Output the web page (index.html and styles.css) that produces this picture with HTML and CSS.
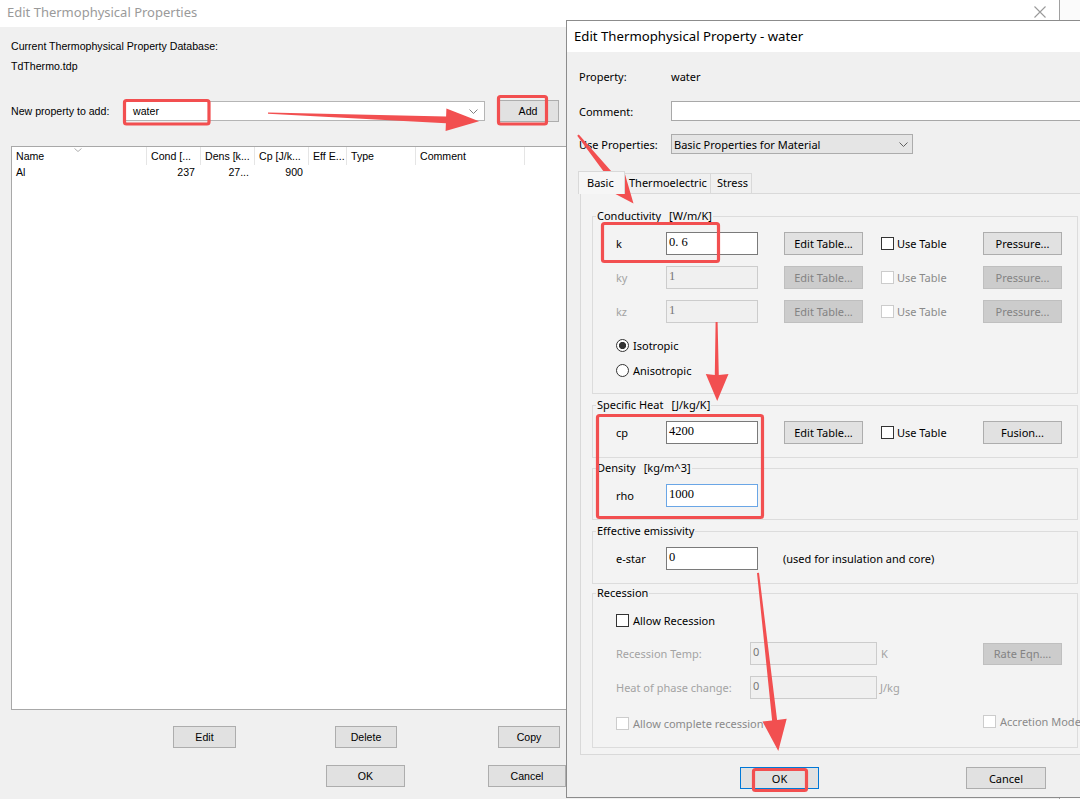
FILE: index.html
```html
<!DOCTYPE html>
<html>
<head>
<meta charset="utf-8">
<link rel="stylesheet" href="styles.css">
</head>
<body>
<div class="main">
  <div class="main-title">
    <span>Edit Thermophysical Properties</span>
    <svg class="close-x" width="12" height="12" viewBox="0 0 12 12"><path d="M0.5 0.5 L11.5 11.5 M11.5 0.5 L0.5 11.5" stroke="#9a9a9a" stroke-width="1.1" fill="none"/></svg>
  </div>
  <div class="main-body">
    <div class="db-label">Current Thermophysical Property Database:</div>
    <div class="db-file">TdThermo.tdp</div>
    <div class="add-row">
      <span class="add-label">New property to add:</span>
      <div class="combo">
        <span class="combo-text">water</span>
        <svg class="chev" width="9" height="5" viewBox="0 0 9 5"><path d="M0.5 0.5 L4.5 4.5 L8.5 0.5" fill="none" stroke="#808080"/></svg>
      </div>
      <div class="btn add-btn">Add</div>
    </div>
    <div class="list">
      <div class="list-head">
        <div class="hc c-name">Name<svg class="sort" width="8" height="4" viewBox="0 0 8 4"><path d="M0.5 0.5 L4 3.5 L7.5 0.5" fill="none" stroke="#b0b0b0"/></svg></div>
        <div class="hc c-cond">Cond [...</div>
        <div class="hc c-dens">Dens [k...</div>
        <div class="hc c-cp">Cp [J/k...</div>
        <div class="hc c-eff">Eff E...</div>
        <div class="hc c-type">Type</div>
        <div class="hc c-comment">Comment</div>
      </div>
      <div class="list-row">
        <div class="rc c-name">Al</div>
        <div class="rc c-cond num">237</div>
        <div class="rc c-dens num">27...</div>
        <div class="rc c-cp num">900</div>
      </div>
    </div>
    <div class="btn-row r1">
      <div class="btn b-edit">Edit</div>
      <div class="btn b-delete">Delete</div>
      <div class="btn b-copy">Copy</div>
    </div>
    <div class="btn-row r2">
      <div class="btn b-ok">OK</div>
      <div class="btn b-cancel">Cancel</div>
    </div>
  </div>
</div>

<div class="dialog">
  <div class="dlg-title">Edit Thermophysical Property - water</div>
  <div class="dlg-body">
    <div class="frow"><span class="flabel">Property:</span><span>water</span></div>
    <div class="frow r-comment"><span class="flabel">Comment:</span><div class="comment-box"></div></div>
    <div class="frow r-use"><span class="flabel">Use Properties:</span>
      <div class="select"><span>Basic Properties for Material</span>
        <svg class="chev" width="9" height="5" viewBox="0 0 9 5"><path d="M0.5 0.5 L4.5 4.5 L8.5 0.5" fill="none" stroke="#606060"/></svg>
      </div>
    </div>
    <div class="tabs">
      <div class="tab sel">Basic</div>
      <div class="tab t-thermo">Thermoelectric</div>
      <div class="tab t-stress">Stress</div>
    </div>
    <div class="panel">
      <fieldset class="grp g-cond">
        <legend>Conductivity<span class="unit">[W/m/K]</span></legend>
        <div class="prow">
          <span class="plabel">k</span><div class="inp">0. 6</div>
          <div class="btn pbtn">Edit Table...</div>
          <div class="chk"><span class="box"></span>Use Table</div>
          <div class="btn pbtn last">Pressure...</div>
        </div>
        <div class="prow dis">
          <span class="plabel">ky</span><div class="inp">1</div>
          <div class="btn pbtn">Edit Table...</div>
          <div class="chk"><span class="box"></span>Use Table</div>
          <div class="btn pbtn last">Pressure...</div>
        </div>
        <div class="prow dis">
          <span class="plabel">kz</span><div class="inp">1</div>
          <div class="btn pbtn">Edit Table...</div>
          <div class="chk"><span class="box"></span>Use Table</div>
          <div class="btn pbtn last">Pressure...</div>
        </div>
        <div class="radio r-iso"><span class="rdot on"></span>Isotropic</div>
        <div class="radio r-aniso"><span class="rdot"></span>Anisotropic</div>
      </fieldset>

      <fieldset class="grp g-cp">
        <legend>Specific Heat<span class="unit">[J/kg/K]</span></legend>
        <div class="prow">
          <span class="plabel">cp</span><div class="inp">4200</div>
          <div class="btn pbtn">Edit Table...</div>
          <div class="chk"><span class="box"></span>Use Table</div>
          <div class="btn pbtn last">Fusion...</div>
        </div>
      </fieldset>

      <fieldset class="grp g-rho">
        <legend>Density<span class="unit">[kg/m^3]</span></legend>
        <div class="prow">
          <span class="plabel">rho</span><div class="inp focus">1000</div>
        </div>
      </fieldset>

      <fieldset class="grp g-eps">
        <legend>Effective emissivity</legend>
        <div class="prow">
          <span class="plabel">e-star</span><div class="inp">0</div>
          <span class="note">(used for insulation and core)</span>
        </div>
      </fieldset>

      <fieldset class="grp g-rec">
        <legend>Recession</legend>
        <div class="chkrow"><span class="box"></span>Allow Recession</div>
        <div class="rrow dis r-temp">
          <span class="rlabel">Recession Temp:</span><div class="rinp">0</div>
          <span class="runit">K</span>
          <div class="btn rbtn">Rate Eqn....</div>
        </div>
        <div class="rrow dis r-heat">
          <span class="rlabel">Heat of phase change:</span><div class="rinp">0</div>
          <span class="runit">J/kg</span>
        </div>
        <div class="lastrow dis">
          <div class="chk wide"><span class="box"></span>Allow complete recession</div>
          <div class="chk accr"><span class="box"></span>Accretion Model</div>
        </div>
      </fieldset>
    </div>
    <div class="dlg-btns">
      <div class="btn dbtn ok">OK</div>
      <div class="btn dbtn cancel">Cancel</div>
    </div>
  </div>
</div>

<svg class="annot" width="1080" height="799" viewBox="0 0 1080 799">
  <g fill="none" stroke="#f24f50" stroke-width="3.2">
    <rect x="124.5" y="100.5" width="84.5" height="23.5" rx="2"/>
    <rect x="498.5" y="96.5" width="48" height="27.5" rx="2"/>
    <rect x="602.5" y="223.5" width="116" height="38" rx="2"/>
    <rect x="597.5" y="415.5" width="165" height="102" rx="2"/>
    <rect x="753.5" y="769.5" width="53" height="21" rx="2"/>
  </g>
  <g fill="#f24f50">
    <polygon points="268,112.4 446.1,116.6 446.4,108.6 479,121.2 445.6,131 445.9,123.2 268,113.8"/>
    <polygon points="577.2,135.8 611.4,181.9 604,187.9 633.5,203.5 624.2,171.5 616.8,177.5 578.8,134.4"/>
    <polygon points="715.6,322 717.6,322 718.8,375 728.5,374 717.2,401 705.8,374 714.8,375"/>
    <polygon points="757,573 772.1,720.5 762.5,721.6 778.3,751 786.7,718.8 777.1,719.9 759,572.8"/>
  </g>
</svg>
</body>
</html>
```

FILE: styles.css
```css
* { box-sizing: border-box; }
html, body { margin: 0; padding: 0; }
body {
  width: 1080px;
  height: 799px;
  overflow: hidden;
  position: relative;
  background: #fbfbfb;
  font-family: "Liberation Sans", Arial, sans-serif;
  font-size: 10.6px;
  color: #000;
}

/* ---------- main window ---------- */
.main {
  width: 1060px;
  height: 799px;
  background: #f0f0f0;
  border-right: 1px solid #a0a0a0;
}
.main-title {
  height: 27px;
  background: #fff;
  display: flex;
  justify-content: space-between;
  align-items: flex-start;
  padding: 2px 13px 0 7px;
  font-family: "Noto Sans", "Open Sans", sans-serif;
  font-size: 13px;
  line-height: 20px;
  color: #9a9a9a;
}
.close-x { margin-top: 4px; }
.main-body { padding: 12px 0 0 11px; }
.db-label { line-height: 14px; }
.db-file { line-height: 14px; margin-top: 6px; }
.add-row {
  display: flex;
  align-items: center;
  height: 22px;
  margin-top: 27px;
}
.add-label { width: 112px; flex: none; }
.combo {
  width: 362px;
  height: 20px;
  background: #fff;
  border: 1px solid #b5b5b5;
  display: flex;
  align-items: center;
  justify-content: space-between;
  padding: 0 6px 0 9px;
}
.add-btn { margin-left: 12px; width: 62px; height: 22px; }

.btn {
  background: #e1e1e1;
  border: 1px solid #adadad;
  display: flex;
  align-items: center;
  justify-content: center;
  flex: none;
  white-space: nowrap;
}

.list {
  margin-top: 24px;
  width: 1037px;
  height: 564px;
  background: #fff;
  border: 1px solid #a8a8a8;
}
.list-head, .list-row { display: flex; }
.list-head { height: 18px; }
.list-row { height: 15px; }
.hc {
  position: relative;
  border-right: 1px solid #e5e5e5;
  padding-left: 4px;
  line-height: 18px;
  white-space: nowrap;
  overflow: hidden;
  flex: none;
}
.rc {
  line-height: 15px;
  padding-left: 4px;
  white-space: nowrap;
  flex: none;
}
.rc.num { text-align: right; padding-right: 6px; }
.c-name { width: 135px; }
.c-cond { width: 54px; }
.c-dens { width: 54px; }
.c-cp { width: 54px; }
.c-eff { width: 38px; }
.c-type { width: 69px; }
.c-comment { width: 109px; }
.sort { position: absolute; left: 62px; top: 1px; }

.btn-row { display: flex; height: 22px; }
.btn-row .btn { height: 22px; }
.r1 { margin-top: 16px; }
.r2 { margin-top: 17px; }
.b-edit { margin-left: 162px; width: 63px; }
.b-delete { margin-left: 99px; width: 62px; }
.b-copy { margin-left: 101px; width: 62px; }
.b-ok { margin-left: 315px; width: 79px; }
.b-cancel { margin-left: 83px; width: 78px; }

/* ---------- dialog ---------- */
.dialog {
  position: absolute;
  left: 566px;
  top: 20px;
  width: 530px;
  height: 778px;
  background: #f0f0f0;
  border: 1px solid #8c8c8c;
  font-family: "Noto Sans", "Open Sans", sans-serif;
  font-size: 11px;
}
.dlg-title {
  height: 31px;
  background: #fff;
  padding-left: 7px;
  font-size: 13.2px;
  line-height: 31px;
  color: #000;
}
.dlg-body { padding: 14px 0 0 12px; }
.frow { display: flex; align-items: center; height: 20px; }
.flabel { width: 92px; flex: none; }
.r-comment { margin-top: 15px; }
.r-use { margin-top: 13px; }
.comment-box {
  width: 420px;
  height: 20px;
  background: #fff;
  border: 1px solid #a8a8a8;
  flex: none;
}
.select {
  width: 242px;
  height: 20px;
  background: #e5e5e5;
  border: 1px solid #acacac;
  display: flex;
  align-items: center;
  justify-content: space-between;
  padding: 0 4px 0 2px;
}

.tabs {
  display: flex;
  height: 23px;
  margin-top: 17px;
  margin-left: 1px;
}
.tab {
  height: 20px;
  margin-top: 2px;
  border: 1px solid #d9d9d9;
  border-bottom: none;
  background: #f0f0f0;
  line-height: 18px;
  padding-left: 4px;
  white-space: nowrap;
  flex: none;
}
.tab.sel {
  position: relative;
  z-index: 1;
  height: 23px;
  margin-top: 0;
  margin-left: -2px;
  width: 47px;
  background: #f6f6f6;
  padding-left: 8px;
  line-height: 21px;
}
.t-thermo { width: 86px; border-left: none; }
.t-stress { width: 41px; border-left: none; padding-left: 6px; }

.panel {
  margin-top: -1px;
  margin-left: 1px;
  width: 520px;
  height: 562px;
  background: #f3f3f3;
  border: 1px solid #d9d9d9;
  padding: 14px 0 0 11px;
}

.grp {
  margin: 0;
  padding: 8px 0 0 23px;
  width: 486px;
  border: 1px solid #dcdcdc;
  min-inline-size: 0;
}
.grp legend {
  padding: 0 1px;
  margin-left: -20px;
  line-height: 16px;
}
.unit { margin-left: 8px; }
.g-cond { padding-bottom: 15px; }
.g-cp { margin-top: 3px; padding-bottom: 13px; }
.g-rho { margin-top: 2px; padding-bottom: 12px; }
.g-eps { margin-top: 3px; padding-bottom: 13px; }
.g-rec { margin-top: 1px; padding-top: 11px; padding-bottom: 16px; }

.prow { display: flex; align-items: center; height: 23px; }
.prow + .prow { margin-top: 11px; }
.plabel { width: 50px; flex: none; }
.inp, .rinp {
  width: 92px;
  height: 23px;
  flex: none;
  background: #fff;
  border: 1px solid #7a7a7a;
  font-family: "Liberation Serif", "DejaVu Serif", serif;
  font-size: 12.5px;
  line-height: 16px;
  padding: 1px 0 0 2px;
}
.inp.focus { border-color: #6aa6e6; }
.pbtn { margin-left: 26px; width: 79px; height: 23px; }
.pbtn.last { margin-left: 0; }
.chk {
  display: flex;
  align-items: center;
  margin-left: 18px;
  width: 102px;
  flex: none;
  white-space: nowrap;
}
.box {
  width: 13px;
  height: 13px;
  border: 1px solid #333;
  background: #fff;
  margin-right: 3px;
  flex: none;
}
.dis { color: #8a8a8a; }
.dis .plabel, .dis .rlabel, .dis .runit { color: #a3a3a3; }
.dis .inp, .dis .rinp {
  background: #f0f0f0;
  border-color: #cccccc;
  color: #777;
}
.dis .btn {
  background: #cccccc;
  border-color: #bfbfbf;
  color: #838383;
}
.dis .box { border-color: #cccccc; background: #fff; }

.radio { display: flex; align-items: center; height: 16px; }
.r-iso { margin-top: 14px; }
.r-aniso { margin-top: 9px; }
.rdot {
  width: 13px;
  height: 13px;
  border: 1px solid #333;
  border-radius: 50%;
  background: #fff;
  margin-right: 4px;
  flex: none;
}
.rdot.on { background: radial-gradient(circle, #333 0 3.3px, #fff 3.9px); }

.note { margin-left: 25px; white-space: nowrap; }

.chkrow { display: flex; align-items: center; height: 16px; }
.chkrow .box { margin-right: 4px; }
.rrow { display: flex; align-items: center; height: 23px; }
.r-temp { margin-top: 14px; }
.r-heat { margin-top: 11px; }
.rlabel { width: 134px; flex: none; }
.rinp { width: 127px; font-family: "Noto Sans", sans-serif; font-size: 11px; color: #999; }
.runit { margin-left: 4px; width: 102px; flex: none; }
.r-heat .runit { margin-left: 3px; }
.rbtn { width: 79px; height: 22px; }
.lastrow { display: flex; align-items: center; height: 16px; margin-top: 16px; }
.chk.wide { margin-left: 0; width: 367px; }
.chk.accr { margin-left: 0; width: 95px; margin-top: -4px; }
.lastrow .box { margin-right: 4px; }

.dlg-btns { display: flex; margin-top: 12px; }
.dbtn { height: 22px; }
.ok { margin-left: 161px; width: 79px; border-color: #0078d7; }
.cancel { margin-left: 147px; width: 80px; }

/* ---------- annotations ---------- */
.annot {
  position: absolute;
  left: 0;
  top: 0;
  pointer-events: none;
}
```
